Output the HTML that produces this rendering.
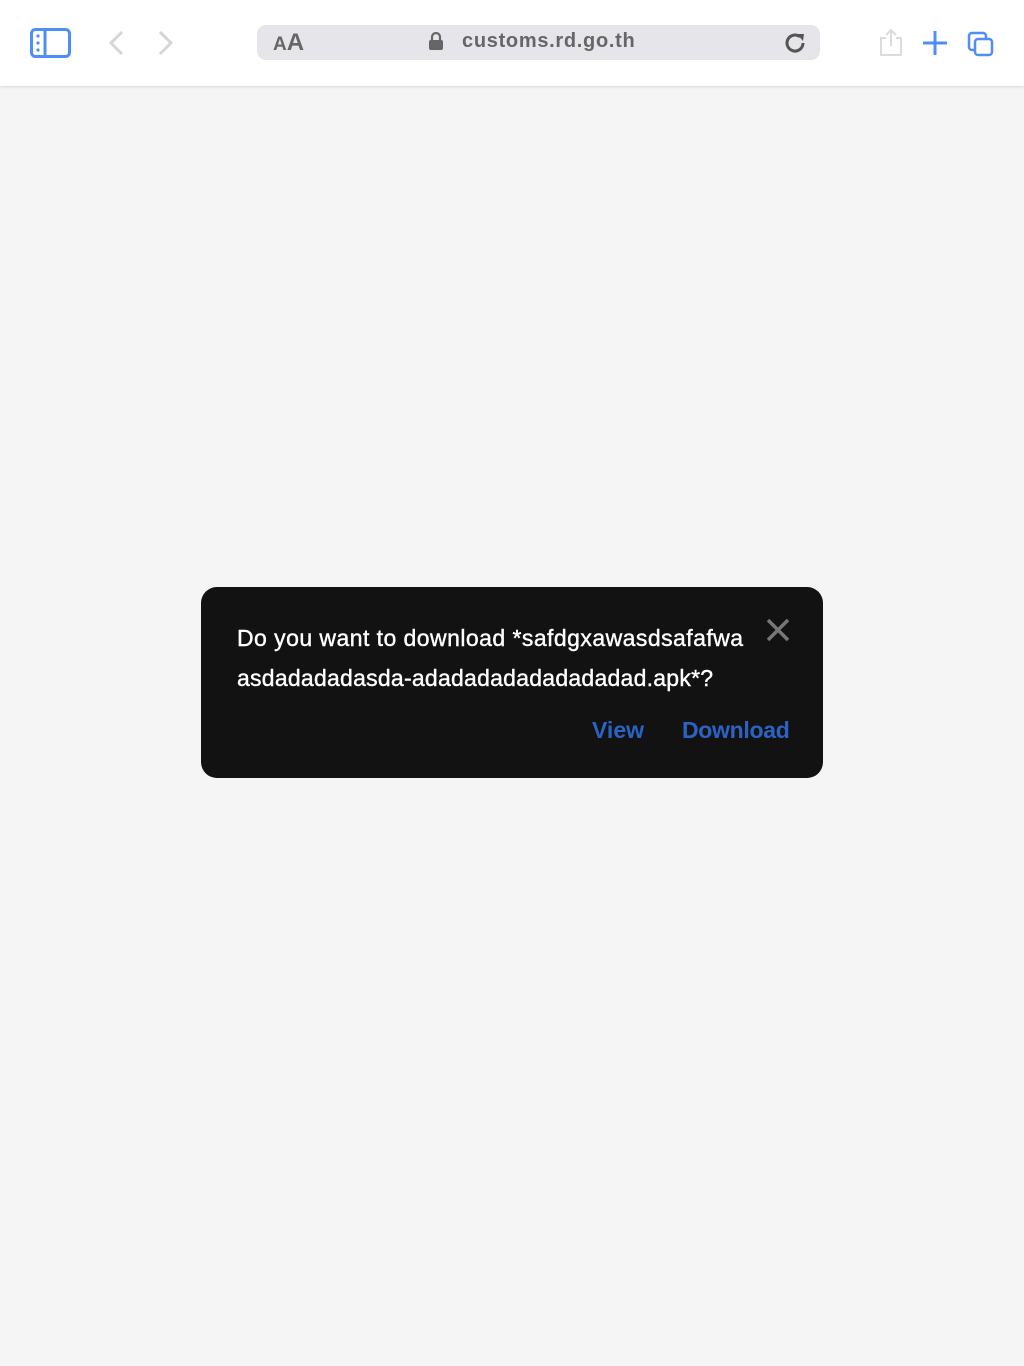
<!DOCTYPE html>
<html><head><meta charset="utf-8"><style>
html,body{margin:0;padding:0}
body{width:1024px;height:1366px;background:#f5f5f5;position:relative;overflow:hidden;font-family:"Liberation Sans",sans-serif}
.bar{position:absolute;left:0;top:0;width:1024px;height:86px;background:#fff;box-shadow:0 1px 3px rgba(0,0,0,0.12)}
.url{position:absolute;left:257px;top:25px;width:563px;height:35px;background:#e6e6ea;border-radius:9px}
.dlg{position:absolute;left:201px;top:587px;width:622px;height:191px;background:#121212;border-radius:16px;color:#fff}
.t{position:absolute;left:36px;font-size:23px;white-space:nowrap;-webkit-text-stroke:0.4px #fff}
.b{position:absolute;top:130px;font-size:23px;color:#2a63c4;font-weight:bold}
</style></head><body>
<div class="bar">
<svg style="position:absolute;left:30px;top:28px" width="41" height="30"><rect x="1.5" y="1.5" width="38" height="27" rx="4" fill="none" stroke="#4f8ef7" stroke-width="3"/><line x1="15" y1="2" x2="15" y2="28" stroke="#4f8ef7" stroke-width="3"/><circle cx="8" cy="8" r="1.6" fill="#4f8ef7"/><circle cx="8" cy="15" r="1.6" fill="#4f8ef7"/><circle cx="8" cy="22" r="1.6" fill="#4f8ef7"/></svg>
<svg style="position:absolute;left:106px;top:30px" width="20" height="26"><path d="M16 2 L5 13 L16 24" fill="none" stroke="#d6d6d6" stroke-width="3"/></svg>
<svg style="position:absolute;left:156px;top:30px" width="20" height="26"><path d="M4 2 L15 13 L4 24" fill="none" stroke="#d6d6d6" stroke-width="3"/></svg>
<div class="url">
<div style="position:absolute;left:16px;top:4px;color:#666;font-weight:bold;font-size:18px"><span style="font-size:19px">A</span><span style="font-size:24px">A</span></div>
<svg style="position:absolute;left:171px;top:7px" width="16" height="18"><path d="M4 8 V5 a4 4 0 0 1 8 0 V8" fill="none" stroke="#666" stroke-width="2.2"/><rect x="1" y="8" width="14" height="10" rx="2" fill="#666"/></svg>
<div style="position:absolute;left:205px;top:5px;color:#666;font-weight:bold;font-size:20px;letter-spacing:0.7px">customs.rd.go.th</div>
<svg style="position:absolute;left:527px;top:6px" width="24" height="24"><path d="M19 12 a8 8 0 1 1 -3 -6.2" fill="none" stroke="#555" stroke-width="3"/><path d="M13 3 L20 3 L19 10 Z" fill="#555"/></svg>
</div>
<svg style="position:absolute;left:878px;top:28px" width="26" height="28"><path d="M8 10 H3 V27 H23 V10 H18" fill="none" stroke="#dcdcdc" stroke-width="2"/><path d="M13 18 V2 M8 7 L13 2 L18 7" fill="none" stroke="#dcdcdc" stroke-width="2"/></svg>
<svg style="position:absolute;left:922px;top:30px" width="26" height="26"><path d="M13 1 V25 M1 13 H25" stroke="#4f8ef7" stroke-width="3"/></svg>
<svg style="position:absolute;left:967px;top:31px" width="28" height="26"><rect x="2" y="2" width="17" height="17" rx="3" fill="none" stroke="#4f8ef7" stroke-width="2.5"/><rect x="8" y="8" width="17" height="16" rx="3" fill="#fff" stroke="#4f8ef7" stroke-width="2.5"/></svg>
</div>
<div class="dlg">
<div class="t" style="top:38px;letter-spacing:0.45px">Do you want to download *safdgxawasdsafafwa</div>
<div class="t" style="top:78px;letter-spacing:0.25px">asdadadadasda-adadadadadadadadad.apk*?</div>
<svg style="position:absolute;left:565px;top:31px" width="24" height="24"><path d="M2 2 L22 22 M22 2 L2 22" stroke="#777" stroke-width="3.5"/></svg>
<div class="b" style="left:391px">View</div>
<div class="b" style="left:481px;letter-spacing:-0.3px">Download</div>
</div>
</body></html>
